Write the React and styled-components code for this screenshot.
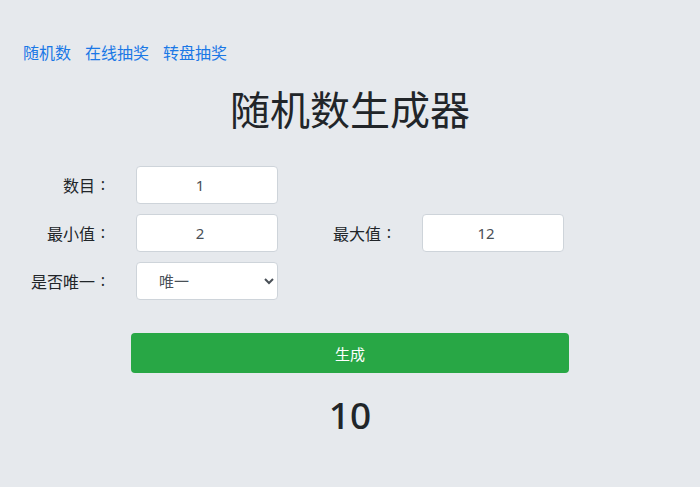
import React, { useState } from 'react'
import styled, { createGlobalStyle } from 'styled-components'

const Global = createGlobalStyle`
  html, body {
    margin: 0;
    background: #e6e9ed;
    font-family: "Noto Sans", "Noto Sans CJK SC", sans-serif;
    color: #212529;
  }
`

const Page = styled.div`
  width: 700px;
  padding-top: 40px;
`
const Nav = styled.nav`
  display: flex;
  gap: 14px;
  padding-left: 23px;
`
const NavLink = styled.a`
  color: #1a78e6;
  text-decoration: none;
  font-size: 16px;
  line-height: 26px;
`
const Title = styled.h1`
  margin: 18px 0 30px;
  text-align: center;
  font-size: 40px;
  font-weight: 400;
  line-height: 52px;
`
const Form = styled.div`
  display: grid;
  grid-template-columns: 124px 142px 120px 142px;
  column-gap: 12px;
  row-gap: 10px;
  align-items: center;
`
const Label = styled.label`
  display: flex;
  justify-content: flex-end;
  padding-right: 13px;
  font-size: 16px;
`
const Colon = styled.span`
  width: 16px;
  text-align: center;
`
const Input = styled.input`
  box-sizing: border-box;
  height: 38px;
  width: 142px;
  border: 1px solid #ced4da;
  border-radius: 4px;
  background: #fff;
  text-align: center;
  padding: 0 16px 0 2px;
  font-family: inherit;
  font-size: 15px;
  color: #495057;
`
const Select = styled.select`
  box-sizing: border-box;
  height: 38px;
  width: 142px;
  border: 1px solid #ced4da;
  border-radius: 4px;
  background: #fff;
  font-family: inherit;
  font-size: 15px;
  color: #495057;
  padding-left: 18px;
`
const Blank = styled.div``
const Button = styled.button`
  display: block;
  margin: 33px auto 0;
  width: 438px;
  height: 40px;
  border: none;
  border-radius: 4px;
  background: #28a745;
  color: #fff;
  font-family: inherit;
  font-size: 15px;
`
const Result = styled.div`
  margin-top: 18px;
  text-align: center;
  font-size: 37px;
  font-weight: 500;
  line-height: 48px;
`

const Field = ({ children }) => (
  <Label>
    {children}
    <Colon>:</Colon>
  </Label>
)

export default function App() {
  const [count, setCount] = useState('1')
  const [min, setMin] = useState('2')
  const [max, setMax] = useState('12')
  const [unique, setUnique] = useState('1')
  const [result, setResult] = useState('10')

  const generate = () => {
    const lo = Number(min)
    const hi = Number(max)
    const n = Number(count)
    const out = []
    while (out.length < n) {
      const v = Math.floor(Math.random() * (hi - lo + 1)) + lo
      if (unique === '1' && out.includes(v) && out.length < hi - lo + 1) continue
      out.push(v)
    }
    setResult(out.join(' '))
  }

  return (
    <Page>
      <Global />
      <Nav>
        <NavLink href='#'>随机数</NavLink>
        <NavLink href='#'>在线抽奖</NavLink>
        <NavLink href='#'>转盘抽奖</NavLink>
      </Nav>
      <Title>随机数生成器</Title>
      <Form>
        <Field>数目</Field>
        <Input value={count} onChange={e => setCount(e.target.value)} />
        <Blank />
        <Blank />
        <Field>最小值</Field>
        <Input value={min} onChange={e => setMin(e.target.value)} />
        <Field>最大值</Field>
        <Input value={max} onChange={e => setMax(e.target.value)} />
        <Field>是否唯一</Field>
        <Select value={unique} onChange={e => setUnique(e.target.value)}>
          <option value='1'>唯一</option>
          <option value='0'>不唯一</option>
        </Select>
      </Form>
      <Button onClick={generate}>生成</Button>
      <Result>{result}</Result>
    </Page>
  )
}
